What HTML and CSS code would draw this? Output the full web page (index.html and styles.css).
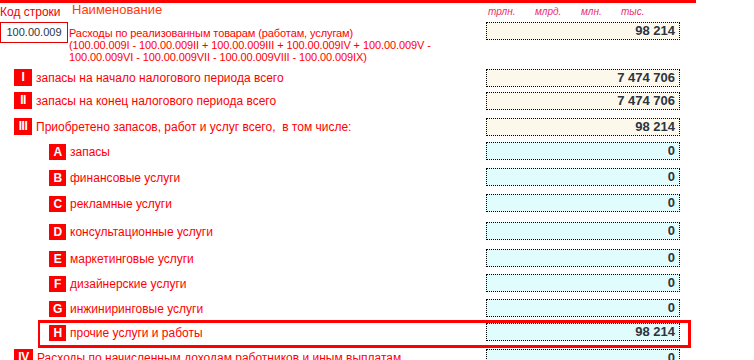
FILE: index.html
```html
<!DOCTYPE html>
<html lang="ru">
<head>
<meta charset="utf-8">
<title>Расходы по реализованным товарам</title>
<link rel="stylesheet" href="styles.css">
</head>
<body>
<div class="form">
  <div class="topbar"></div>

  <div class="head">
    <div class="head-left">
      <span class="code-title">Код строки</span>
      <span class="name-title">Наименование</span>
    </div>
    <div class="units">
      <span class="unit u1">трлн.</span>
      <span class="unit u2">млрд.</span>
      <span class="unit u3">млн.</span>
      <span class="unit">тыс.</span>
    </div>
  </div>

  <div class="row main">
    <div class="label">
      <div class="code">100.00.009</div>
      <div class="desc">Расходы по реализованным товарам (работам, услугам)<br>(100.00.009I - 100.00.009II + 100.00.009III + 100.00.009IV + 100.00.009V -<br>100.00.009VI - 100.00.009VII - 100.00.009VIII - 100.00.009IX)</div>
    </div>
    <div class="val sum">98 214</div>
  </div>

  <div class="row r23">
    <div class="label"><span class="badge">I</span><span class="txt">запасы на начало налогового периода всего</span></div>
    <div class="val sum">7 474 706</div>
  </div>
  <div class="row r26">
    <div class="label"><span class="badge">II</span><span class="txt">запасы на конец налогового периода всего</span></div>
    <div class="val sum">7 474 706</div>
  </div>
  <div class="row r24">
    <div class="label"><span class="badge">III</span><span class="txt">Приобретено запасов, работ и услуг всего,&nbsp; в том числе:</span></div>
    <div class="val sum">98 214</div>
  </div>

  <div class="row r26 sub">
    <div class="label"><span class="badge">A</span><span class="txt">запасы</span></div>
    <div class="val input">0</div>
  </div>
  <div class="row r26 sub">
    <div class="label"><span class="badge">B</span><span class="txt">финансовые услуги</span></div>
    <div class="val input">0</div>
  </div>
  <div class="row r28 sub">
    <div class="label"><span class="badge">C</span><span class="txt">рекламные услуги</span></div>
    <div class="val input">0</div>
  </div>
  <div class="row r27 sub">
    <div class="label"><span class="badge">D</span><span class="txt">консультационные услуги</span></div>
    <div class="val input">0</div>
  </div>
  <div class="row r25 sub">
    <div class="label"><span class="badge">E</span><span class="txt">маркетинговые услуги</span></div>
    <div class="val input">0</div>
  </div>
  <div class="row r25 sub">
    <div class="label"><span class="badge">F</span><span class="txt">дизайнерские услуги</span></div>
    <div class="val input">0</div>
  </div>
  <div class="row r24 sub">
    <div class="label"><span class="badge">G</span><span class="txt">инжиниринговые услуги</span></div>
    <div class="val input">0</div>
  </div>
  <div class="row r26 sub marked">
    <div class="label"><span class="badge">H</span><span class="txt">прочие услуги и работы</span></div>
    <div class="val input">98 214</div>
  </div>

  <div class="row r26">
    <div class="label"><span class="badge wide">IV</span><span class="txt">Расходы по начисленным доходам работников и иным выплатам</span></div>
    <div class="val input">0</div>
  </div>
</div>
</body>
</html>
```

FILE: styles.css
```css
html, body {
  margin: 0;
  padding: 0;
  background: #ffffff;
}

body {
  font-family: "Liberation Sans", Arial, sans-serif;
  color: #ff0000;
  overflow: hidden;
}

.form {
  width: 754px;
}

.topbar {
  width: 696px;
  height: 3px;
  background: #ff0000;
}

/* column titles */
.head {
  display: grid;
  grid-template-columns: 486px 194px;
  height: 19px;
}

.head-left {
  display: flex;
  align-items: flex-start;
}

.code-title {
  width: 72px;
  font-size: 12px;
  line-height: 14px;
  padding-top: 2px;
  color: #ee0000;
}

.name-title {
  font-size: 13px;
  line-height: 14px;
  color: #ff3a10;
}

.units {
  display: flex;
  padding-left: 2px;
  padding-top: 3px;
}

.unit {
  font-size: 10px;
  line-height: 11px;
  font-style: italic;
  color: #e8306a;
}

.u1 { width: 47px; }
.u2 { width: 46px; }
.u3 { width: 40px; }

/* form rows */
.row {
  display: grid;
  grid-template-columns: 486px 194px;
  align-items: start;
  position: relative;
}

.main { height: 47px; }
.r23 { height: 23px; }
.r24 { height: 24px; }
.r25 { height: 25px; }
.r26 { height: 26px; }
.r27 { height: 27px; }
.r28 { height: 28px; }

.label {
  display: flex;
  align-items: center;
  padding-left: 14px;
}

.main .label {
  align-items: flex-start;
  padding-left: 0;
}

.sub .label {
  padding-left: 49px;
  padding-top: 2px;
}

.code {
  box-sizing: border-box;
  width: 68px;
  height: 21px;
  border: 1px solid #e00000;
  font-size: 11px;
  line-height: 19px;
  text-align: center;
  color: #2c3644;
}

.desc {
  padding-top: 5px;
  padding-left: 1px;
  font-size: 11px;
  line-height: 12px;
  letter-spacing: -0.1px;
  color: #ff0000;
}

.badge {
  flex: none;
  box-sizing: border-box;
  width: 18px;
  height: 17px;
  background: #ff0000;
  color: #ffffff;
  font-weight: bold;
  font-size: 12px;
  line-height: 17px;
  text-align: center;
  letter-spacing: -0.5px;
}

.sub .badge {
  width: 17px;
  height: 16px;
  line-height: 16px;
}

.badge.wide { width: 19px; }

.txt {
  padding-left: 4px;
  font-size: 12px;
  line-height: 14px;
  white-space: nowrap;
}

/* value cells */
.val {
  box-sizing: border-box;
  height: 18px;
  border: 1px dotted #000000;
  padding-right: 4px;
  text-align: right;
  font-size: 13px;
  font-weight: bold;
  line-height: 16px;
  color: #2c3440;
}

.sum { background: #fdf8ec; }
.input { background: #e0fcfc; }

/* highlighted row frame */
.marked::after {
  content: "";
  position: absolute;
  left: 38px;
  top: -3px;
  width: 653px;
  height: 28px;
  box-sizing: border-box;
  border: 3px solid #ff0000;
  border-left-width: 2px;
  pointer-events: none;
}
```
